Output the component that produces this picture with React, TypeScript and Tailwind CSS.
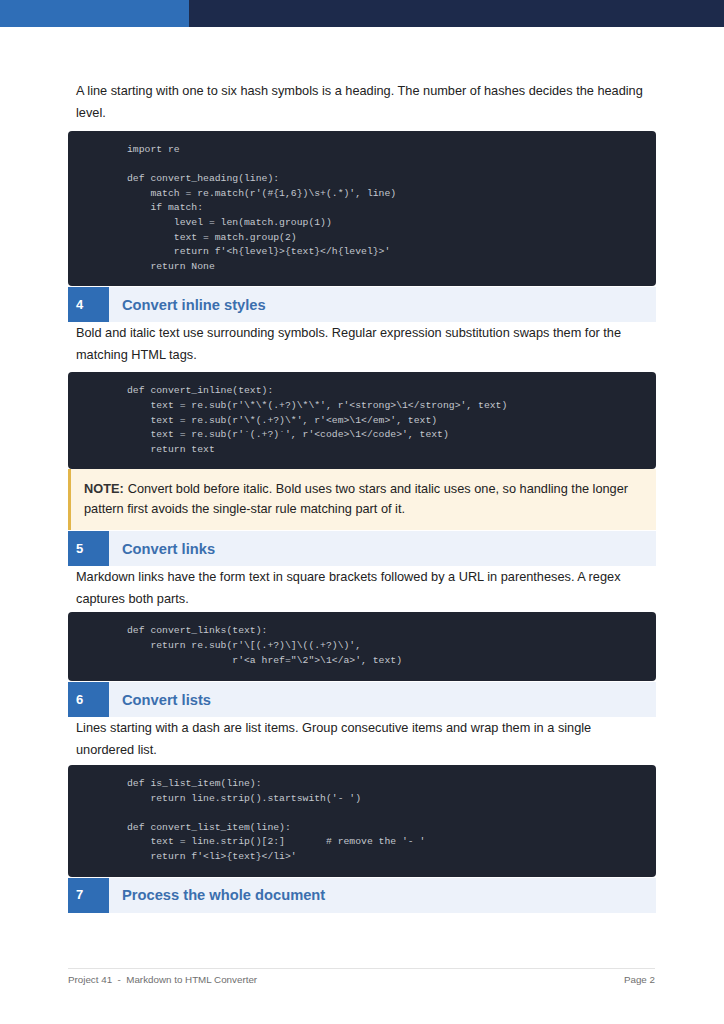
import React from "react";

const sans = { fontFamily: '"Liberation Sans", Arial, sans-serif' };
const mono = { fontFamily: '"Liberation Mono", "Courier New", monospace' };

function Code({ lines, pb = "pb-[12px]" }: { lines: string[]; pb?: string }) {
  return (
    <div className={`bg-[#1f2430] rounded-[4px] pl-[59px] pr-4 pt-[12px] ${pb}`} style={mono}>
      {lines.map((l, i) => (
        <div key={i} className="text-[9.75px] leading-[14.6px] h-[14.6px] text-[#c4c8cf] whitespace-pre">
          {l}
        </div>
      ))}
    </div>
  );
}

function Heading({ n, title }: { n: number; title: string }) {
  return (
    <div className="flex h-[35px] bg-[#edf2fa] mt-px">
      <div className="w-[41px] bg-[#2f6db5] flex items-center pl-[8px] text-white font-bold text-[13px]">{n}</div>
      <div className="flex items-center pl-[13px] text-[#3b6fae] font-bold text-[14.7px]">{title}</div>
    </div>
  );
}

function P({ children, mb = "mb-[7px]" }: { children: React.ReactNode; mb?: string }) {
  return <p className={`px-[8px] text-[12.75px] leading-[22px] text-[#222] ${mb}`}>{children}</p>;
}

export default function App() {
  return (
    <div className="w-[724px] min-h-[1024px] bg-white relative" style={sans}>
      <div className="flex h-[27px]">
        <div className="w-[189px] bg-[#2f6eb7]" />
        <div className="flex-1 bg-[#1d2a4b]" />
      </div>
      <div className="mx-[68px] pt-[53px]">
        <P>
          A line starting with one to six hash symbols is a heading. The number of hashes decides the heading level.
        </P>
        <Code
          lines={[
            "import re",
            "",
            "def convert_heading(line):",
            "    match = re.match(r'(#{1,6})\\s+(.*)', line)",
            "    if match:",
            "        level = len(match.group(1))",
            "        text = match.group(2)",
            "        return f'<h{level}>{text}</h{level}>'",
            "    return None",
          ]}
        />
        <Heading n={4} title="Convert inline styles" />
        <P mb="mb-[6px]">
          Bold and italic text use surrounding symbols. Regular expression substitution swaps them for the matching HTML tags.
        </P>
        <Code
          lines={[
            "def convert_inline(text):",
            "    text = re.sub(r'\\*\\*(.+?)\\*\\*', r'<strong>\\1</strong>', text)",
            "    text = re.sub(r'\\*(.+?)\\*', r'<em>\\1</em>', text)",
            "    text = re.sub(r'`(.+?)`', r'<code>\\1</code>', text)",
            "    return text",
          ]}
        />
        <div className="bg-[#fdf4e3] border-l-[3px] border-[#e2b54a] pl-[13px] pr-3 pt-[10px] pb-[11px] text-[12.75px] leading-[20px] text-[#222]">
          <b className="text-[#333] mr-[4px]">NOTE:</b>Convert bold before italic. Bold uses two stars and italic uses one, so handling the longer pattern first avoids the single-star rule matching part of it.
        </div>
        <Heading n={5} title="Convert links" />
        <P mb="mb-[2px]">
          Markdown links have the form text in square brackets followed by a URL in parentheses. A regex captures both parts.
        </P>
        <Code
          pb="pb-[13px]"
          lines={[
            "def convert_links(text):",
            "    return re.sub(r'\\[(.+?)\\]\\((.+?)\\)',",
            "                  r'<a href=\"\\2\">\\1</a>', text)",
          ]}
        />
        <Heading n={6} title="Convert lists" />
        <P mb="mb-[4px]">
          Lines starting with a dash are list items. Group consecutive items and wrap them in a single unordered list.
        </P>
        <Code
          lines={[
            "def is_list_item(line):",
            "    return line.strip().startswith('- ')",
            "",
            "def convert_list_item(line):",
            "    text = line.strip()[2:]       # remove the '- '",
            "    return f'<li>{text}</li>'",
          ]}
        />
        <Heading n={7} title="Process the whole document" />
      </div>
      <div className="absolute left-[68px] right-[69px] top-[968px] border-t border-[#e3e3e3] pt-[4px] flex justify-between text-[9.8px] leading-[14px] text-[#6f6f6f]">
        <span>Project 41&nbsp; - &nbsp;Markdown to HTML Converter</span>
        <span>Page 2</span>
      </div>
    </div>
  );
}
